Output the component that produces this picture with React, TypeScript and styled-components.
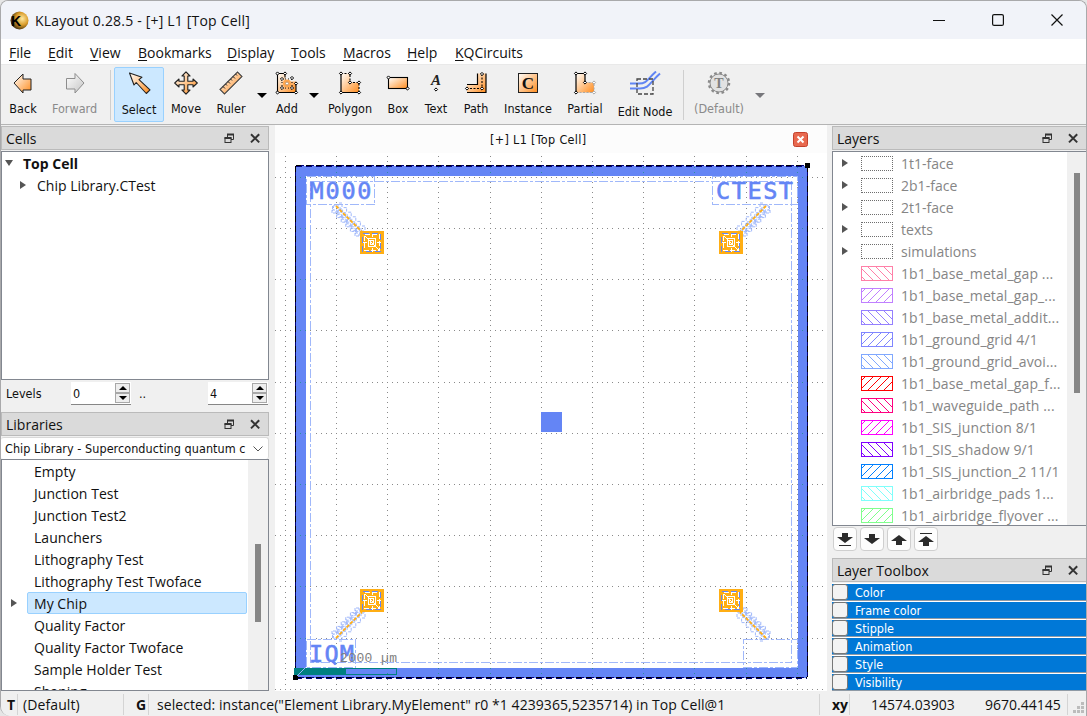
import React from "react";
import styled, { createGlobalStyle, css } from "styled-components";

const UI = `"Open Sans", "Noto Sans", sans-serif`;
const SMALL = `"DejaVu Sans Condensed", "DejaVu Sans", sans-serif`;

const Global = createGlobalStyle`
  * { box-sizing: border-box; }
  html, body { margin: 0; padding: 0; background: #e6e6e6; }
  body { width: 1087px; height: 716px; overflow: hidden; font: 14px/22px ${UI}; color: #111; }
  svg { display: block; flex: none; }
`;

const Window = styled.div`
  width: 1087px;
  height: 716px;
  display: flex;
  flex-direction: column;
  border: 1px solid #a9a9ab;
  border-bottom: 0;
  border-radius: 8px 8px 0 10px;
  background: #f0f0f0;
  overflow: hidden;
`;

const TitleBar = styled.header`
  height: 38px;
  flex: none;
  display: flex;
  align-items: center;
  padding-left: 9px;
  background: #f1f3f9;
`;
const Title = styled.div`
  flex: 1;
  padding-top: 2px;
  margin-left: 6px;
  letter-spacing: 0.19px;
`;
const WinButtons = styled.div`
  display: flex;
  gap: 47px;
  padding-right: 23px;
`;

const MenuBar = styled.nav`
  height: 26px;
  flex: none;
  display: flex;
  gap: 16px;
  padding: 3px 0 0 8px;
  background: #fff;
  border-bottom: 1px solid #e9e9e9;
`;
const MenuItem = styled.span<{ $w: number }>`
  width: ${(p) => p.$w}px;
  white-space: nowrap;
  u { text-underline-offset: 2px; }
`;

const ToolBar = styled.div`
  height: 60px;
  flex: none;
  display: flex;
  padding: 2px 0 0 0;
  border-bottom: 1px solid #b4b4b4;
  background: #f0f0f0;
  font: 12.5px/14px ${SMALL};
`;
const Tool = styled.div<{ $w: number; $on?: boolean; $off?: boolean; $drop?: number }>`
  width: ${(p) => p.$w}px;
  height: 55px;
  display: flex;
  flex-direction: column;
  align-items: center;
  white-space: nowrap;
  padding-top: ${(p) => (p.$on ? 3 : 4)}px;
  border: 1px solid transparent;
  border-width: ${(p) => (p.$on ? 1 : 0)}px;
  color: ${(p) => (p.$off ? "#8a8a8a" : "#111")};
  span { margin-top: ${(p) => 7 + (p.$drop || 0)}px; }
  ${(p) => p.$on && css`background: #cce8ff; border-color: #99d1ff; border-radius: 2px;`}
`;
const Caret = styled.div<{ $w: number; $off?: boolean }>`
  width: ${(p) => p.$w}px;
  display: flex;
  justify-content: center;
  padding: 26px 0 0 1px;
  &::after {
    content: "";
    height: 0;
    border: 5px solid transparent;
    border-top-color: ${(p) => (p.$off ? "#77777b" : "#000")};
    border-bottom: 0;
  }
`;
const ToolSep = styled.div<{ $l: number; $r: number }>`
  width: 1px;
  height: 50px;
  margin: 3px ${(p) => p.$r}px 0 ${(p) => p.$l}px;
  background: #cfcfcf;
`;

const Body = styled.main`
  height: 566px;
  flex: none;
  display: flex;
`;
const Dock = styled.section<{ $w: number }>`
  width: ${(p) => p.$w}px;
  flex: none;
  display: flex;
  flex-direction: column;
  padding-top: 1px;
`;
const DockHead = styled.div`
  height: 24px;
  flex: none;
  display: flex;
  align-items: center;
  padding: 0 7px 0 4px;
  background: #dadada;
  border: 1px solid #bababa;
  span { flex: 1; padding-top: 1px; }
  svg + svg { margin-left: 15px; }
`;
const Panel = styled.div<{ $h: number; $open?: boolean; $gap?: number }>`
  height: ${(p) => p.$h}px;
  margin-top: ${(p) => p.$gap || 0}px;
  flex: none;
  display: flex;
  background: #fff;
  border: 1px solid #828790;
  ${(p) => p.$open && css`border-right: 0;`}
  overflow: hidden;
`;
const Rows = styled.div`
  flex: 1;
  min-width: 0;
`;
const Row = styled.div<{ $indent?: number; $bold?: boolean }>`
  height: 22px;
  display: flex;
  align-items: center;
  padding-left: ${(p) => p.$indent || 0}px;
  font-weight: ${(p) => (p.$bold ? 700 : 400)};
  white-space: nowrap;
  span { padding-top: 2px; }
`;
const Arrow = styled.i<{ $down?: boolean }>`
  width: 0;
  height: 0;
  border: 4px solid transparent;
  ${(p) =>
    p.$down
      ? css`border-top: 6px solid #555; border-bottom: 0; margin-right: 10px;`
      : css`border-left: 6px solid #555; border-right: 0; margin-right: 11px;`}
`;
const LibRow = styled(Row)<{ $sel?: boolean }>`
  padding-left: 9px;
  letter-spacing: 0.04px;
  div {
    height: 22px;
    line-height: 22px;
    width: 220px;
    margin-left: ${(p) => (p.$sel ? 0 : 16)}px;
    padding-left: 6px;
    border: 1px solid transparent;
    border-radius: 2px;
    ${(p) => p.$sel && css`background: #cce8ff; border-color: #99d1ff;`}
  }
  ${Arrow} { margin-right: 10px; }
`;
const Scroll = styled.div<{ $top: number; $len: number; $w: number }>`
  width: ${(p) => p.$w}px;
  flex: none;
  padding: ${(p) => p.$top}px 0 0 7px;
  background: #f0f0f0;
  &::after {
    content: "";
    display: block;
    width: 6px;
    height: ${(p) => p.$len}px;
    background: #868686;
  }
`;
const Levels = styled.div`
  height: 32px;
  flex: none;
  display: flex;
  padding: 2px 0 0 5px;
  font: 12.5px/23px ${SMALL};
  > span { width: 65px; }
  > em { width: 77px; padding-left: 8px; font-style: normal; }
`;
const Spin = styled.div`
  width: 60px;
  height: 23px;
  display: flex;
  justify-content: space-between;
  padding-left: 2px;
  background: #fff;
  border-bottom: 1px solid #868686;
`;
const SpinBtns = styled.div`
  width: 15px;
  padding-top: 1px;
  margin-right: 1px;
  i {
    display: flex;
    align-items: center;
    justify-content: center;
    height: 10px;
    border: 1px solid #a8a8a8;
    background: #eee;
  }
  i::after { content: ""; border: 4px solid transparent; }
  i:first-child::after { border-bottom-color: #000; border-top: 0; }
  i:last-child::after { border-top-color: #000; border-bottom: 0; }
`;
const Combo = styled.div`
  height: 22px;
  flex: none;
  display: flex;
  align-items: center;
  justify-content: space-between;
  margin-top: 1px;
  padding: 0 5px 0 4px;
  background: #fff;
  border: 1px solid #d9d9d9;
  border-width: 1px 1px 0 0;
  border-radius: 3px;
  font: 12.5px/20px ${SMALL};
  letter-spacing: 0.05px;
  white-space: nowrap;
  span { width: 243px; overflow: hidden; }
`;

const View = styled.section`
  width: 552px;
  margin: 0 5px 0 6px;
  flex: none;
`;
const TabBar = styled.div`
  height: 28px;
  display: flex;
  align-items: center;
  padding: 0 19px 0 215px;
  background: #fcfcfc;
  font: 12.5px/16px ${SMALL};
  letter-spacing: 0.33px;
  span { flex: 1; padding-top: 1px; }
`;
const Canvas = styled.div`
  height: 538px;
  background: #fff;
`;

const MoveBar = styled.div`
  height: 32px;
  flex: none;
  display: flex;
  gap: 3px;
  padding: 1px 0 0 1px;
`;
const MoveBtn = styled.div`
  width: 24px;
  height: 24px;
  display: flex;
  align-items: center;
  justify-content: center;
  background: #fdfdfd;
  border: 1px solid #cfcfcf;
  border-radius: 4px;
`;
const LayerRow = styled(Row)`
  padding-left: ${(p) => p.$indent || 9}px;
  color: #858585;
  letter-spacing: 0.12px;
  > ${Arrow} { margin-right: 13px; }
  svg { margin-right: 8px; }
`;
const GroupRow = styled(LayerRow)`
  letter-spacing: 0.02px;
`;
const GroupSwatch = styled.div`
  width: 32px;
  height: 15px;
  margin-right: 8px;
  border: 1px dotted #6e6e6e;
`;
const ToolboxRows = styled.div`
  display: flex;
  flex-direction: column;
  padding-top: 1px;
`;
const ToolboxRow = styled.div`
  height: 18px;
  display: flex;
  align-items: center;
  color: #fff;
  background: #0078d7;
  border-top: 1px solid #fff;
  border-bottom: 1px solid #8f9aa5;
  font: 12.5px/15px ${SMALL};
  i {
    width: 16px;
    height: 16px;
    margin-right: 7px;
    background: #f3f3f3;
    border: 1px solid #777;
    border-radius: 3px;
  }
`;

const StatusBar = styled.footer`
  flex: 1;
  display: flex;
  padding-top: 3px;
  background: #f0f0f0;
  white-space: nowrap;
`;
const Cell = styled.div<{ $w: number; $pad?: number; $bold?: boolean; $line?: boolean; $ls?: number }>`
  width: ${(p) => p.$w}px;
  flex: none;
  height: 21px;
  line-height: 21px;
  padding-left: ${(p) => p.$pad || 0}px;
  font-weight: ${(p) => (p.$bold ? 700 : 400)};
  letter-spacing: ${(p) => p.$ls || 0}px;
  border-right: 1px solid ${(p) => (p.$line ? "#d4d4d4" : "transparent")};
`;

/* ---------- icons ---------- */

const OrangeFill = () => (
  <defs>
    <linearGradient id="og" x1="0" y1="0" x2="1" y2="1">
      <stop offset="0.1" stopColor="#fff3e6" />
      <stop offset="1" stopColor="#ff8c1e" />
    </linearGradient>
    <linearGradient id="gg" x1="0" y1="0" x2="1" y2="1">
      <stop offset="0" stopColor="#fff" />
      <stop offset="1" stopColor="#c4c4c4" />
    </linearGradient>
    <radialGradient id="gold" cx="0.65" cy="0.4" r="0.7">
      <stop offset="0" stopColor="#ffe9a0" />
      <stop offset="0.5" stopColor="#d99b2a" />
      <stop offset="1" stopColor="#2a1c08" />
    </radialGradient>
  </defs>
);
const Ico = ({ children, w = 24 }: { children: React.ReactNode; w?: number }) => (
  <svg width={w} height="24" viewBox={`0 0 ${w} 24`} fill="none">
    {children}
  </svg>
);
const Nodes = ({ at, c = "#000" }: { at: number[][]; c?: string }) => (
  <>
    {at.map(([x, y]) => (
      <path key={`${x}-${y}`} d={`M${x} ${y - 1.6}l1.600 1.600l-1.600 1.600l-1.600-1.600z`} fill="#fff" stroke={c} />
    ))}
  </>
);
const icons = {
  back: (
    <Ico>
      <path d="M3 12L12 3v5h8v11h-8v3z" fill="url(#og)" stroke="#222" strokeLinejoin="round" />
    </Ico>
  ),
  forward: (
    <Ico>
      <path d="M21 12L12 2.500v5H3.500v10.500H12v4z" fill="url(#gg)" stroke="#8d8d8d" strokeLinejoin="round" />
    </Ico>
  ),
  select: (
    <Ico>
      <path d="M2.500 2l12.500 4.200-3 2.500L23 18.800 19.300 22.500 9.200 11.500 7 14z" fill="url(#og)" stroke="#222" strokeWidth="1.1" strokeLinejoin="round" />
    </Ico>
  ),
  move: (
    <Ico>
      <path d="M12 .8l4 4.200h-2.200v5.200H19V8l4.300 4L19 16v-2.200h-5.200V19H16l-4 4.200L8 19h2.200v-5.200H5V16L.7 12 5 8v2.200h5.200V5H8z" fill="url(#og)" stroke="#222" strokeWidth="1.1" strokeLinejoin="round" />
    </Ico>
  ),
  ruler: (
    <Ico>
      <path d="M1 18.500L18.500 1l4.500 4.500L5.500 23z" fill="url(#og)" stroke="#444" strokeWidth="1.1" />
      <path d="M4 15.500l2 2M6.500 13l1.500 1.500M9 10.500l2 2M11.500 8l1.500 1.500M14 5.500l2 2M16.500 3l1.500 1.500" stroke="#222" />
    </Ico>
  ),
  add: (
    <Ico>
      <path d="M2.500 2.500h8v8H21v11H2.500z" fill="url(#og)" />
      <path d="M2.500 2.500H10v4M2.500 2.500v19H21v-10" stroke="#000" strokeWidth="1.1" />
      <path d="M7 8h10M7 8v9h10V8" stroke="#000" strokeDasharray="1 2" />
      <circle cx="12" cy="12.500" r="4" fill="#ffa64d" />
      <Nodes at={[[2.5, 2.5], [10, 2.5], [2.5, 21.5], [21, 21.5], [21, 12.5], [7, 8], [17, 7], [7, 17], [17, 17]]} />
      <circle cx="12" cy="12.500" r="1.500" fill="#fff" stroke="#b89878" />
    </Ico>
  ),
  polygon: (
    <Ico>
      <path d="M3 2.500h9v9h9v10H3z" fill="url(#og)" />
      <path d="M3 2.500v19h18" stroke="#000" strokeWidth="1.2" />
      <path d="M3 2.500h9v9h9v10" stroke="#000" strokeWidth="1.1" strokeDasharray="2 1.500" />
      <Nodes at={[[3, 2.5], [12, 2.5], [12, 11.5], [21, 11.5], [3, 21.5], [21, 21.5]]} />
    </Ico>
  ),
  box: (
    <Ico>
      <rect x="2.500" y="6.500" width="19" height="11" fill="url(#og)" stroke="#000" strokeWidth="1.1" />
      <Nodes at={[[2.5, 6.5], [21.5, 17.5]]} />
    </Ico>
  ),
  text: (
    <Ico>
      <text x="12" y="13.500" textAnchor="middle" fontFamily="Liberation Serif" fontSize="15" fontWeight="700" fontStyle="italic" fill="#222">A</text>
      <Nodes at={[[12, 18.5]]} />
    </Ico>
  ),
  path: (
    <Ico>
      <path d="M13.500 2.500H22v19H3v-8h10.500z" fill="url(#og)" />
      <path d="M13.500 2.500v11H3M22 2.500v19H3" stroke="#000" strokeWidth="1.2" />
      <path d="M18 3v14.500H3" stroke="#000" strokeWidth="1.1" strokeDasharray="2 1.500" />
      <Nodes at={[[18, 3], [18, 17.5], [3, 17.5]]} />
    </Ico>
  ),
  instance: (
    <Ico>
      <rect x="2.500" y="2.500" width="19" height="19" fill="url(#og)" stroke="#222" />
      <text x="12" y="18" textAnchor="middle" fontFamily="Liberation Serif" fontSize="17" fontWeight="700" fill="#111">C</text>
    </Ico>
  ),
  partial: (
    <Ico>
      <path d="M3 2.500h9v9h9v10H3z" fill="url(#og)" />
      <path d="M12 11.500V2.500H3v19" stroke="#000" strokeWidth="1.2" />
      <path d="M12 11.500h9v10H3" stroke="#aaa" strokeWidth="1.1" strokeDasharray="2 1.500" />
      <Nodes c="#aaa" at={[[21, 11.5], [21, 21.5]]} />
      <Nodes at={[[3, 2.5], [12, 2.5], [12, 11.5], [3, 21.5]]} />
    </Ico>
  ),
  edit: (
    <Ico w={32}>
      <path d="M1 12.500h9c8 0 8-4 17-12M1 17.500h10c9 0 10-6 20-15" stroke="#6185f3" strokeWidth="2" />
      <rect x="8" y="8" width="16" height="15" stroke="#444" strokeWidth="1.3" strokeDasharray="4 2" />
    </Ico>
  ),
  gear: (
    <Ico>
      <circle cx="12" cy="12" r="10" stroke="#8a8a8a" strokeWidth="2.500" strokeDasharray="2.600 2.640" />
      <circle cx="12" cy="12" r="9" fill="#e2e2e2" stroke="#8a8a8a" />
      <text x="12" y="17" textAnchor="middle" fontFamily="Liberation Serif" fontSize="14" fontWeight="700" fill="#808080">T</text>
    </Ico>
  ),
};

const FloatIcon = () => (
  <svg width="11" height="11" viewBox="0 0 11 11" fill="none" stroke="#333">
    <path d="M3.500 4V1.500h6v5H7" />
    <path d="M3 1.500h7" strokeWidth="2" />
    <rect x="1" y="5" width="6" height="4.500" />
    <path d="M.5 5h7" strokeWidth="2" />
  </svg>
);
const CloseIcon = () => (
  <svg width="11" height="11" viewBox="0 0 11 11" stroke="#333" strokeWidth="2">
    <path d="M1 1.200l8.200 8.200M9.200 1.200l-8.200 8.200" />
  </svg>
);
const Head = ({ children }: { children: string }) => (
  <DockHead>
    <span>{children}</span>
    <FloatIcon />
    <CloseIcon />
  </DockHead>
);

const Swatch = ({ color, dir }: { color: string; dir: string }) => (
  <svg width="32" height="15" viewBox="0 0 32 15" fill="none" stroke={color}>
    {[-10, -2, 6, 14, 22, 30].map((x) => (
      <path key={x} d={dir === "b" ? `M${x} 0l15 15` : `M${x + 15} 0l-15 15`} />
    ))}
    <rect x="0.500" y="0.500" width="31" height="14" />
  </svg>
);

/* ---------- layout drawing ---------- */

const BLUE = "#6485f5";
const PALE = "#a0b8fa";
const ORANGE = "#ffae14";

const gridPath = () => {
  let d = "";
  const dot = (x: number, y: number) => {
    d += `M${Math.floor(x)} ${Math.floor(y)}h1v1h-1z`;
  };
  for (let i = 0; i < 11; i++)
    for (let j = -5; j < 101; j++) dot(285.3 + i * 51.2, 177.3 + j * 5.12);
  for (let i = 0; i < 11; i++)
    for (let j = -2; j < 106; j++) dot(285.3 + j * 5.12, 177.3 + i * 51.2);
  return d;
};

const Marker = ({ x, y }: { x: number; y: number }) => (
  <g transform={`translate(${x} ${y})`} fill="none" shapeRendering="crispEdges">
    <rect width="24" height="23" fill={ORANGE} />
    <rect x="2.500" y="2.500" width="18" height="18" stroke={BLUE} strokeDasharray="6 3" />
    <rect x="4.500" y="3.500" width="15" height="16" stroke="#fff" strokeDasharray="5 2" />
    <path d="M12 3v3M12 17v4M3 11.500h4M17 11.500h4" stroke="#fff" />
    <rect x="8.500" y="7.500" width="7" height="8" stroke="#fff" strokeWidth="1" />
    <rect x="10.500" y="9.500" width="3" height="4" stroke="#fff" />
    <path d="M5 5l14 14" stroke="#fff" shapeRendering="auto" />
  </g>
);

const trail = [0, 1, 2, 3, 4, 5];
const Trail = ({ x, y, sx, sy }: { x: number; y: number; sx: number; sy: number }) => (
  <g transform={`translate(${x} ${y}) scale(${sx} ${sy})`} fill="none">
    {trail.map((i) => (
      <g key={i} transform={`translate(${i * 4.6} ${i * 4.6})`} stroke={PALE}>
        <path d="M-2 -2h4v3h3v5h-4v-3h-4zM3 -4h3v4M-4 3v3h4M-3.500 -1v5M-1 5h4" strokeDasharray="3 1" />
      </g>
    ))}
    <path d="M0 -1L26 25" stroke={ORANGE} strokeWidth="1.800" strokeDasharray="3.500 1.500" />
  </g>
);

const Layout = () => (
  <svg width="552" height="538" viewBox="275 153 552 538">
    <clipPath id="band">
      <path d="M296 166h512v512H296zM306 176v492h492V176z" clipRule="evenodd" />
    </clipPath>
    <g shapeRendering="crispEdges">
      <path d={gridPath()} fill="#8a8a8a" />
      <path d="M296 166h511v512H296zM306 176v492h492V176z" fill={BLUE} fillRule="evenodd" />
      <path d={gridPath()} fill="#2f8f9f" clipPath="url(#band)" />
      <rect x="541" y="412" width="21" height="20" fill={BLUE} />
      <g fill="none" stroke={PALE} strokeDasharray="9 2 3 2">
        <rect x="310.500" y="181.500" width="481" height="481" />
        <rect x="306.500" y="176.500" width="68" height="28" />
        <rect x="712.500" y="176.500" width="85" height="28" />
        <rect x="306.500" y="639.500" width="49" height="28" />
        <rect x="743.500" y="639.500" width="54" height="28" />
      </g>
      <path d="M295.500 166v511M807.500 166v511" stroke="#00007a" />
      <path d="M295.500 166v511M807.500 166v511" stroke="#000" strokeDasharray="6 4" />
      <path d="M296 165.500h511M296 677.500h511" stroke="#00007a" strokeDasharray="8 2" />
      <path d="M296 166.500h511M296 678.500h511" stroke="#00007a" strokeDasharray="6 4" />
      <path d="M296 165.500h511M296 677.500h511" stroke="#000" strokeDasharray="5 5" />
    </g>
    <Trail x={336} y={207} sx={1} sy={1} />
    <Trail x={766} y={207} sx={-1} sy={1} />
    <Trail x={336} y={637} sx={1} sy={-1} />
    <Trail x={766} y={637} sx={-1} sy={-1} />
    <Marker x={360} y={231} />
    <Marker x={719} y={231} />
    <Marker x={360} y={589} />
    <Marker x={719} y={589} />
    <g fontFamily="DejaVu Sans Mono" fontSize="23.500" fill={BLUE} stroke={BLUE} strokeWidth="0.600">
      <text x="309.500" y="199" textLength="62">M000</text>
      <text x="716" y="199" textLength="77">CTEST</text>
      <text x="309" y="662" textLength="45">IQM</text>
    </g>
    <g shapeRendering="crispEdges">
      <rect x="294.500" y="668.500" width="102" height="6" fill="none" stroke="#008080" />
      <rect x="294" y="668" width="52" height="7" fill="#008080" />
      <rect x="805" y="163" width="5" height="5" fill="#000" />
      <rect x="293" y="675" width="5" height="5" fill="#000" />
    </g>
    <path d="M297 676l10-10" stroke={PALE} />
    <text x="340" y="662" textLength="57" fontFamily="Liberation Mono" fontSize="13" fill="#808080">2000 µm</text>
  </svg>
);

/* ---------- data ---------- */

const menus: [string, number][] = [
  ["File", 23], ["Edit", 26], ["View", 32], ["Bookmarks", 73], ["Display", 48],
  ["Tools", 36], ["Macros", 48], ["Help", 32], ["KQCircuits", 70],
];
const libs = [
  "Empty", "Junction Test", "Junction Test2", "Launchers", "Lithography Test",
  "Lithography Test Twoface", "My Chip", "Quality Factor", "Quality Factor Twoface",
  "Sample Holder Test", "Shaping",
];
const groups = ["1t1-face", "2b1-face", "2t1-face", "texts", "simulations"];
const layers: [string, string, string][] = [
  ["1b1_base_metal_gap ...", "#ff80a8", "b"],
  ["1b1_base_metal_gap_...", "#c080ff", "f"],
  ["1b1_base_metal_addit...", "#9580ff", "b"],
  ["1b1_ground_grid 4/1", "#8086ff", "f"],
  ["1b1_ground_grid_avoi...", "#80a8ff", "b"],
  ["1b1_base_metal_gap_f...", "#ff0000", "f"],
  ["1b1_waveguide_path ...", "#ff0080", "b"],
  ["1b1_SIS_junction 8/1", "#ff00ff", "f"],
  ["1b1_SIS_shadow 9/1", "#8000ff", "b"],
  ["1b1_SIS_junction_2 11/1", "#0080ff", "f"],
  ["1b1_airbridge_pads 1...", "#80fffb", "b"],
  ["1b1_airbridge_flyover ...", "#80ff8d", "f"],
];

export default function App() {
  return (
    <>
      <Global />
      <Window>
        <TitleBar>
          <svg width="19" height="19" viewBox="0 0 19 19">
            <OrangeFill />
            <circle cx="9.500" cy="9.500" r="9" fill="url(#gold)" />
            <text x="1" y="14.500" fontFamily="Liberation Sans" fontWeight="700" fontSize="14" fill="#000">K</text>
          </svg>
          <Title>KLayout 0.28.5 - [+] L1 [Top Cell]</Title>
          <WinButtons>
            <svg width="12" height="12" stroke="#111"><path d="M0 6.500h12" /></svg>
            <svg width="12" height="12" fill="none" stroke="#111" strokeWidth="1.200"><rect x="0.600" y="0.600" width="10.800" height="10.800" rx="1.500" /></svg>
            <svg width="12" height="12" stroke="#111" strokeWidth="1.200"><path d="M.5 .5l11 11M11.500 .5l-11 11" /></svg>
          </WinButtons>
        </TitleBar>
        <MenuBar>
          {menus.map(([m, w]) => (
            <MenuItem key={m} $w={w}><u>{m[0]}</u>{m.slice(1)}</MenuItem>
          ))}
        </MenuBar>
        <ToolBar>
          <Tool $w={44}>{icons.back}<span>Back</span></Tool>
          <Tool $w={59} $off>{icons.forward}<span>Forward</span></Tool>
          <ToolSep $l={6} $r={3} />
          <Tool $w={50} $on $drop={1}>{icons.select}<span>Select</span></Tool>
          <Tool $w={44}>{icons.move}<span>Move</span></Tool>
          <Tool $w={46}>{icons.ruler}<span>Ruler</span></Tool>
          <Caret $w={14} />
          <Tool $w={38}>{icons.add}<span>Add</span></Tool>
          <Caret $w={14} />
          <Tool $w={60}>{icons.polygon}<span>Polygon</span></Tool>
          <Tool $w={36}>{icons.box}<span>Box</span></Tool>
          <Tool $w={40}>{icons.text}<span>Text</span></Tool>
          <Tool $w={40}>{icons.path}<span>Path</span></Tool>
          <Tool $w={64}>{icons.instance}<span>Instance</span></Tool>
          <Tool $w={50}>{icons.partial}<span>Partial</span></Tool>
          <Tool $w={70} $drop={3}>{icons.edit}<span>Edit Node</span></Tool>
          <ToolSep $l={3} $r={4} />
          <Tool $w={62} $off>{icons.gear}<span>(Default)</span></Tool>
          <Caret $w={18} $off />
        </ToolBar>
        <Body>
          <Dock $w={268}>
            <Head>Cells</Head>
            <Panel $h={229} $gap={1}>
              <Rows>
                <Row $indent={3} $bold><Arrow $down /><span>Top Cell</span></Row>
                <Row $indent={18}><Arrow /><span>Chip Library.CTest</span></Row>
              </Rows>
            </Panel>
            <Levels>
              <span>Levels</span>
              <Spin>0<SpinBtns><i /><i /></SpinBtns></Spin>
              <em>..</em>
              <Spin>4<SpinBtns><i /><i /></SpinBtns></Spin>
            </Levels>
            <Head>Libraries</Head>
            <Combo>
              <span>Chip Library - Superconducting quantum c</span>
              <svg width="10" height="6" fill="none" stroke="#555"><path d="M.5 .5l4.500 4.500 4.500-4.500" /></svg>
            </Combo>
            <Panel $h={232}>
              <Rows>
                {libs.map((l) => (
                  <LibRow key={l} $sel={l === "My Chip"}>
                    {l === "My Chip" && <Arrow />}
                    <div>{l}</div>
                  </LibRow>
                ))}
              </Rows>
              <Scroll $w={20} $top={84} $len={78} />
            </Panel>
          </Dock>
          <View>
            <TabBar>
              <span>[+] L1 [Top Cell]</span>
              <svg width="15" height="15" viewBox="0 0 15 15">
                <rect x="0.500" y="0.500" width="14" height="14" rx="2" fill="#e8694f" stroke="#c4412c" />
                <path d="M4.500 4.500l6 6M10.500 4.500l-6 6" stroke="#fff" strokeWidth="2" />
              </svg>
            </TabBar>
            <Canvas><Layout /></Canvas>
          </View>
          <Dock $w={255}>
            <Head>Layers</Head>
            <Panel $h={375} $open $gap={1}>
              <Rows>
                {groups.map((g) => (
                  <GroupRow key={g}><Arrow /><GroupSwatch /><span>{g}</span></GroupRow>
                ))}
                {layers.map(([t, c, d]) => (
                  <LayerRow key={t} $indent={28}><Swatch color={c} dir={d} /><span>{t}</span></LayerRow>
                ))}
              </Rows>
              <Scroll $w={20} $top={21} $len={220} />
            </Panel>
            <MoveBar>
              {["M7 1h6v4h5l-8 6-8-6h5zM4 13h12v1H4z", "M7 2h6v4h5l-8 6-8-6h5z", "M7 13h6V9h5l-8-6-8 6h5z", "M7 14h6v-4h5l-8-6-8 6h5zM4 1h12v1H4z"].map((d) => (
                <MoveBtn key={d}>
                  <svg width="18" height="15" viewBox="1 0 18 15"><path d={d} fill="#2b2b2b" /></svg>
                </MoveBtn>
              ))}
            </MoveBar>
            <Head>Layer Toolbox</Head>
            <ToolboxRows>
              {["Color", "Frame color", "Stipple", "Animation", "Style", "Visibility"].map((t) => (
                <ToolboxRow key={t}><i />{t}</ToolboxRow>
              ))}
            </ToolboxRows>
          </Dock>
        </Body>
        <StatusBar>
          <Cell $w={17} $pad={6} $bold $line>T</Cell>
          <Cell $w={106} $pad={5} $line $ls={0.1}>(Default)</Cell>
          <Cell $w={25} $pad={12} $bold $line>G</Cell>
          <Cell $w={671} $pad={8} $line $ls={0.06}>selected: instance("Element Library.MyElement" r0 *1 4239365,5235714) in Top Cell@1</Cell>
          <Cell $w={30} $pad={12} $bold $line>xy</Cell>
          <Cell $w={113} $pad={21}>14574.03903</Cell>
          <Cell $w={105} $pad={22} $line>9670.44145</Cell>
          <svg width="17" height="21" fill="#bcbcbc">
            <path d="M13 8h3v3h-3zM9 12h3v3H9zM13 12h3v3h-3zM5 16h3v3H5zM9 16h3v3H9zM13 16h3v3h-3z" />
          </svg>
        </StatusBar>
      </Window>
    </>
  );
}
